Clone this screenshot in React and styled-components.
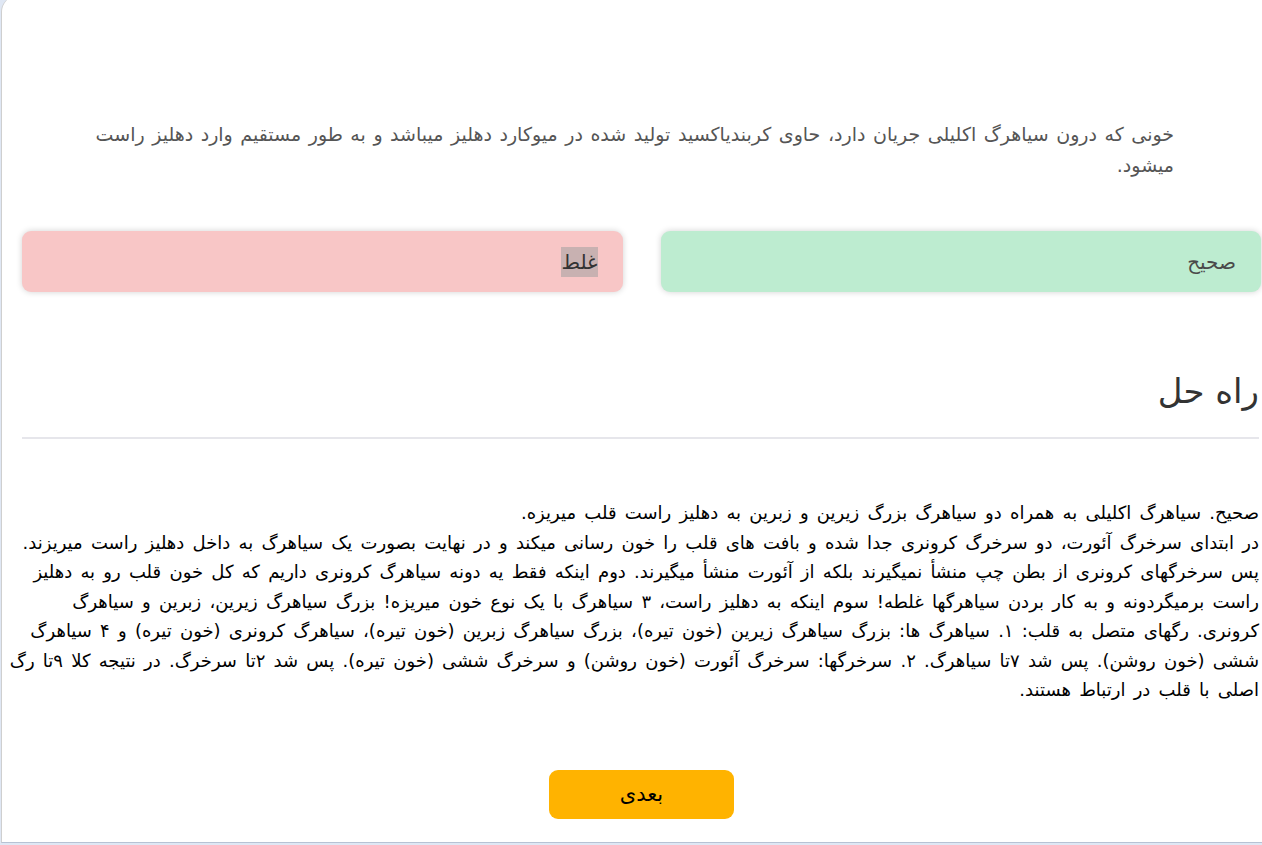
import React from 'react'
import styled, { createGlobalStyle } from 'styled-components'

const GlobalStyle = createGlobalStyle`
  html, body {
    margin: 0;
    padding: 0;
    background: #dfe7f4;
  }
  body {
    font-family: "DejaVu Sans", "Noto Sans", sans-serif;
    overflow: hidden;
  }
`

const Card = styled.div`
  direction: rtl;
  box-sizing: border-box;
  margin: -4px -1px 0 1px;
  height: 847px;
  background: #fff;
  border-left: 1px solid #cfcfcf;
  border-bottom: 1px solid #b7c2d4;
  border-top-left-radius: 16px;
  padding: 0 2px 0 20px;
  display: flex;
  flex-direction: column;
`

const Question = styled.p`
  margin: 123px 87px 0 68px;
  font-size: 19px;
  word-spacing: 1.5px;
  line-height: 31px;
  color: #555;
  text-align: right;
`

const Options = styled.div`
  display: grid;
  grid-template-columns: 1fr 1fr;
  column-gap: 38px;
  margin-top: 50px;
`

const tones = {
  right: { bg: '#bdecd0', fg: '#4a4a4a' },
  wrong: { bg: '#f8c6c6', fg: '#333' },
}

const Option = styled.div`
  height: 61px;
  border-radius: 9px;
  background: ${p => tones[p.$tone].bg};
  color: ${p => tones[p.$tone].fg};
  box-shadow: 0 0 6px rgba(0, 0, 0, 0.18);
  display: flex;
  align-items: center;
  padding-right: 25px;
  font-size: 20px;
`

const Picked = styled.span`
  background: #c8b1b1;
  padding: 3px 0;
`

const Heading = styled.h2`
  margin: 77px 2px 0 0;
  font-size: 34px;
  font-weight: normal;
  color: #333;
  line-height: 44px;
`

const Rule = styled.hr`
  margin: 24px 2px 0 0;
  border: 0;
  border-top: 2px solid #e6e6eb;
`

const Solution = styled.div`
  margin: 59px 2px 0 -16px;
  font-size: 18px;
  word-spacing: 2.5px;
  line-height: 29.5px;
  color: #000;
  text-align: right;
`

const Footer = styled.div`
  display: flex;
  justify-content: center;
  margin-top: 65px;
`

const NextButton = styled.button`
  width: 185px;
  height: 49px;
  border: 0;
  border-radius: 9px;
  background: #ffb300;
  color: #000;
  font-family: inherit;
  font-size: 21px;
  cursor: pointer;
`

export default function App() {
  return (
    <>
      <GlobalStyle />
      <Card>
        <Question>
          خونی که درون سیاهرگ اکلیلی جریان دارد، حاوی کربندیاکسید تولید شده در میوکارد دهلیز میباشد و به طور مستقیم وارد دهلیز راست میشود.
        </Question>
        <Options>
          <Option $tone="right">صحیح</Option>
          <Option $tone="wrong"><Picked>غلط</Picked></Option>
        </Options>
        <Heading>راه حل</Heading>
        <Rule />
        <Solution>
          صحیح. سیاهرگ اکلیلی به همراه دو سیاهرگ بزرگ زیرین و زبرین به دهلیز راست قلب میریزه.
          <br />
          در ابتدای سرخرگ آئورت، دو سرخرگ کرونری جدا شده و بافت های قلب را خون رسانی میکند و در نهایت بصورت یک سیاهرگ به داخل دهلیز راست میریزند.
          <br />
          پس سرخرگهای کرونری از بطن چپ منشأ نمیگیرند بلکه از آئورت منشأ میگیرند. دوم اینکه فقط یه دونه سیاهرگ کرونری داریم که کل خون قلب رو به دهلیز راست برمیگردونه و به کار بردن سیاهرگها غلطه! سوم اینکه به دهلیز راست، ۳ سیاهرگ با یک نوع خون میریزه! بزرگ سیاهرگ زیرین، زبرین و سیاهرگ کرونری. رگهای متصل به قلب: ۱. سیاهرگ ها: بزرگ سیاهرگ زیرین (خون تیره)، بزرگ سیاهرگ زبرین (خون تیره)، سیاهرگ کرونری (خون تیره) و ۴ سیاهرگ ششی (خون روشن). پس شد ۷تا سیاهرگ. ۲. سرخرگها: سرخرگ آئورت (خون روشن) و سرخرگ ششی (خون تیره). پس شد ۲تا سرخرگ. در نتیجه کلا ۹تا رگ اصلی با قلب در ارتباط هستند.
        </Solution>
        <Footer>
          <NextButton>بعدی</NextButton>
        </Footer>
      </Card>
    </>
  )
}
